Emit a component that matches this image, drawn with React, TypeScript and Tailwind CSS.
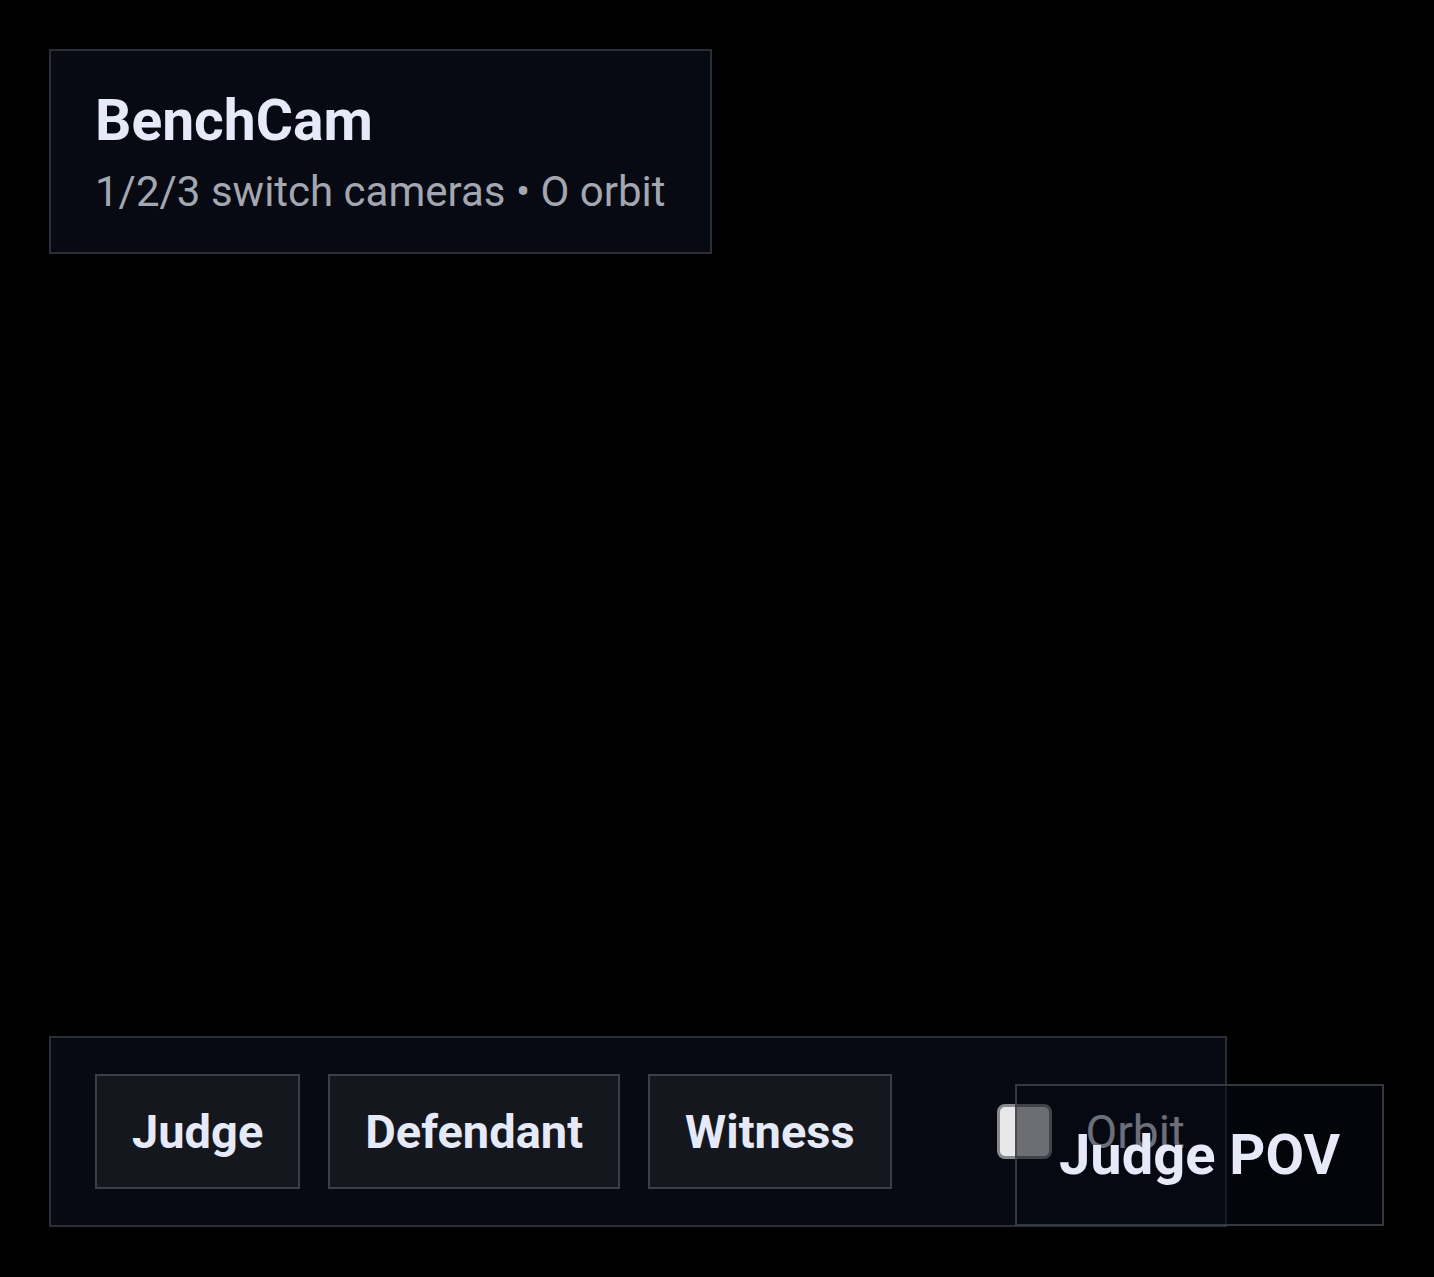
import React, { useState } from 'react';

const cameras = ['Judge', 'Defendant', 'Witness'];

const App: React.FC = () => {
  const [active, setActive] = useState('Judge');
  const [orbit, setOrbit] = useState(false);

  return (
    <div className="relative h-screen w-full overflow-hidden bg-black text-[#e6e9f7] font-['Roboto',sans-serif]">
      {/* Header */}
      <div className="absolute left-[49px] top-[49px] border-2 border-[#2b2e36] bg-[#070a12] px-[44px] pt-[36px] pb-[36px]">
        <h1 className="text-[57px] font-bold leading-[67px]">BenchCam</h1>
        <p className="mt-[13px] text-[42px] leading-[49px] text-[#a3a7b0]">1/2/3 switch cameras • O orbit</p>
      </div>

      {/* Camera bar */}
      <div className="absolute left-[49px] bottom-[50px] flex items-center border-2 border-[#2b2e36] bg-[#070a12] py-[36px] pl-[44px] pr-[40px]">
        <div className="flex gap-[28px]">
          {cameras.map((cam) => (
            <button
              key={cam}
              onClick={() => setActive(cam)}
              className="h-[115px] border-2 border-[#3b3e46] bg-[#14171e] px-[35px] text-[47px] font-bold leading-none"
            >
              {cam}
            </button>
          ))}
        </div>
        <label className="ml-[105px] flex items-center gap-[34px] text-[46px] leading-none">
          <input
            type="checkbox"
            checked={orbit}
            onChange={() => setOrbit(!orbit)}
            className="h-[55px] w-[55px] appearance-none rounded-[8px] border-[3px] border-[#8a8a8e] bg-[#e8e8ea]"
          />
          <span>Orbit</span>
        </label>
      </div>

      {/* POV label */}
      <div className="absolute right-[50px] bottom-[51px] border-2 border-[#40434b]/80 bg-[#070a12]/55 px-[42px] py-[36px]">
        <span className="text-[56px] font-bold leading-[66px]">{active} POV</span>
      </div>
    </div>
  );
};

export default App;
